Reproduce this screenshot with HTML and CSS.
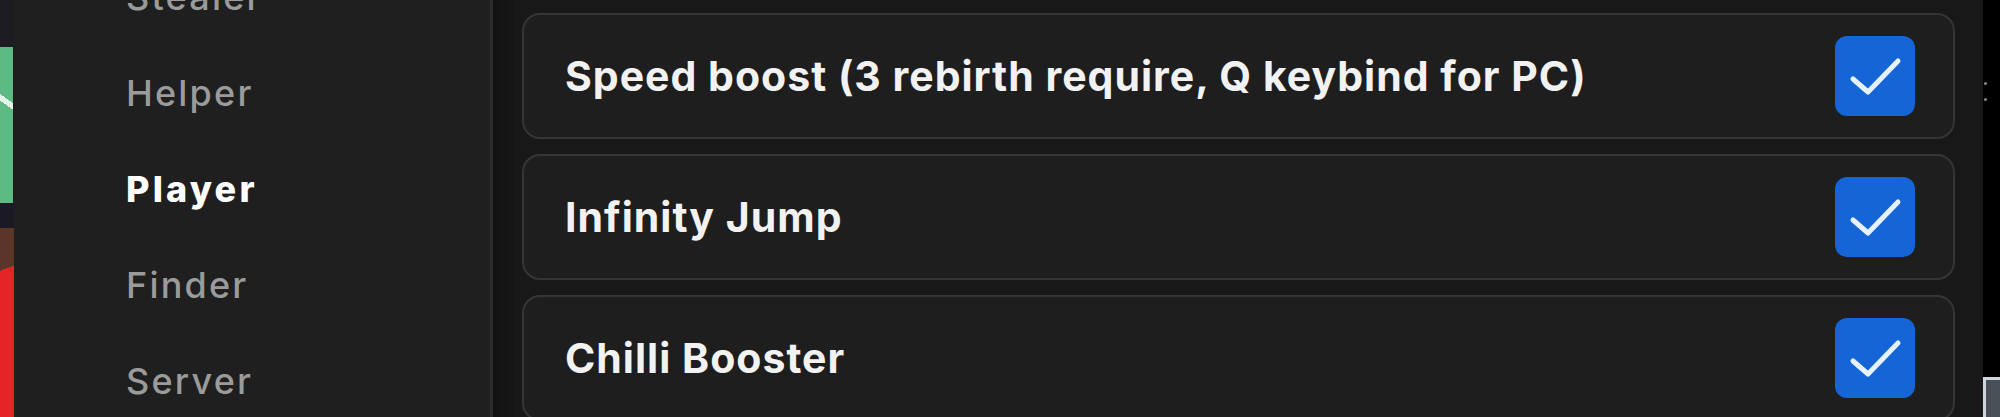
FILE: index.html
```html
<!DOCTYPE html>
<html lang="en">
    <head>
        <title>Player</title>
        <meta charset="utf-8" />
        <link rel="stylesheet" href="styles.css">
    </head>
    <body>
        <div class="screen">
            <div class="backdrop">
                <div class="bd-top"></div>
                <div class="bd-green"></div>
                <div class="bd-gap"></div>
                <div class="bd-red"></div>
            </div>
            <div class="sidebar">
                <ul class="tabs">
                    <li>Stealer</li>
                    <li>Helper</li>
                    <li class="active">Player</li>
                    <li>Finder</li>
                    <li>Server</li>
                </ul>
            </div>
            <div class="divider"></div>
            <div class="content">
                <div class="option">
                    <span class="label">Speed boost (3 rebirth require, Q keybind for PC)</span>
                    <span class="check">
                        <svg viewBox="0 0 80 80" width="80" height="80"><path d="M18 43 L33 56 L63 25" /></svg>
                    </span>
                </div>
                <div class="option">
                    <span class="label">Infinity Jump</span>
                    <span class="check">
                        <svg viewBox="0 0 80 80" width="80" height="80"><path d="M18 43 L33 56 L63 25" /></svg>
                    </span>
                </div>
                <div class="option">
                    <span class="label">Chilli Booster</span>
                    <span class="check">
                        <svg viewBox="0 0 80 80" width="80" height="80"><path d="M18 43 L33 56 L63 25" /></svg>
                    </span>
                </div>
            </div>
            <div class="edge">
                <i class="dot"></i>
                <i class="dot"></i>
                <div class="corner"></div>
            </div>
        </div>
    </body>
</html>
```

FILE: styles.css
```css
* {
    padding: 0;
    margin: 0;
    box-sizing: border-box;
}
html,
body {
    width: 2000px;
    height: 417px;
    overflow: hidden;
    background-color: #000;
}
body {
    font-family: Inter, "Noto Sans", sans-serif;
    -webkit-font-smoothing: antialiased;
}

.screen {
    display: flex;
    height: 417px;
}

/* game view peeking out on the left */
.backdrop {
    width: 14px;
    display: flex;
    flex-direction: column;
    flex-shrink: 0;
}
.backdrop .bd-top {
    height: 47px;
    background-color: #1d1c22;
}
.backdrop .bd-green {
    height: 156px;
    background: linear-gradient(35deg, #5dba82 0 62%, #e6f2ea 62% 66%, #5dba82 66%);
    border-right: 1px solid #0e1a12;
}
.backdrop .bd-gap {
    height: 25px;
    background-color: #1b1a24;
}
.backdrop .bd-red {
    flex: 1;
    background: linear-gradient(160deg, #5b3628 0 22%, #e52525 22%);
}

.sidebar {
    width: 476px;
    flex-shrink: 0;
    background-color: #1f1f1f;
    overflow: hidden;
}
.sidebar .tabs {
    list-style: none;
    margin-top: -51px;
    padding-left: 112px;
}
.sidebar .tabs li {
    height: 96px;
    line-height: 96px;
    font-size: 36px;
    font-weight: 500;
    letter-spacing: 2.2px;
    color: #9b9b9b;
}
.sidebar .tabs li.active {
    color: #fff;
    font-weight: 800;
    letter-spacing: 3.2px;
}

.divider {
    width: 3px;
    flex-shrink: 0;
    background-color: #2b2b2b;
}

.content {
    width: 1490px;
    flex-shrink: 0;
    padding: 13px 28px 0 29px;
    display: flex;
    flex-direction: column;
    gap: 15px;
    background: linear-gradient(90deg, #121212, #181818 28px);
}

.option {
    height: 126px;
    flex-shrink: 0;
    display: flex;
    align-items: center;
    justify-content: space-between;
    padding: 0 38px 0 41px;
    border: 2px solid #353535;
    border-radius: 18px;
    background-color: #1e1e1e;
}
.option .label {
    font-size: 41px;
    font-weight: 650;
    letter-spacing: 1px;
    color: #f2f2f2;
    white-space: nowrap;
}
.option .check {
    width: 80px;
    height: 80px;
    border-radius: 12px;
    background-color: #1565d6;
    display: flex;
}
.option .check path {
    fill: none;
    stroke: #e6f3ff;
    stroke-width: 5;
    stroke-linecap: round;
    stroke-linejoin: round;
}

.edge {
    flex: 1;
    position: relative;
    background-color: #000;
}
.edge .dot {
    position: absolute;
    left: 1px;
    width: 3px;
    height: 3px;
    border-radius: 50%;
    background-color: #8a8a8a;
}
.edge .dot:nth-child(1) {
    top: 82px;
}
.edge .dot:nth-child(2) {
    top: 98px;
}
.edge .corner {
    position: absolute;
    left: 0;
    right: 0;
    top: 377px;
    bottom: 0;
    border-left: 3px solid #cfd6e0;
    border-top: 3px solid #cfd6e0;
    background-color: #4a5058;
}
```
